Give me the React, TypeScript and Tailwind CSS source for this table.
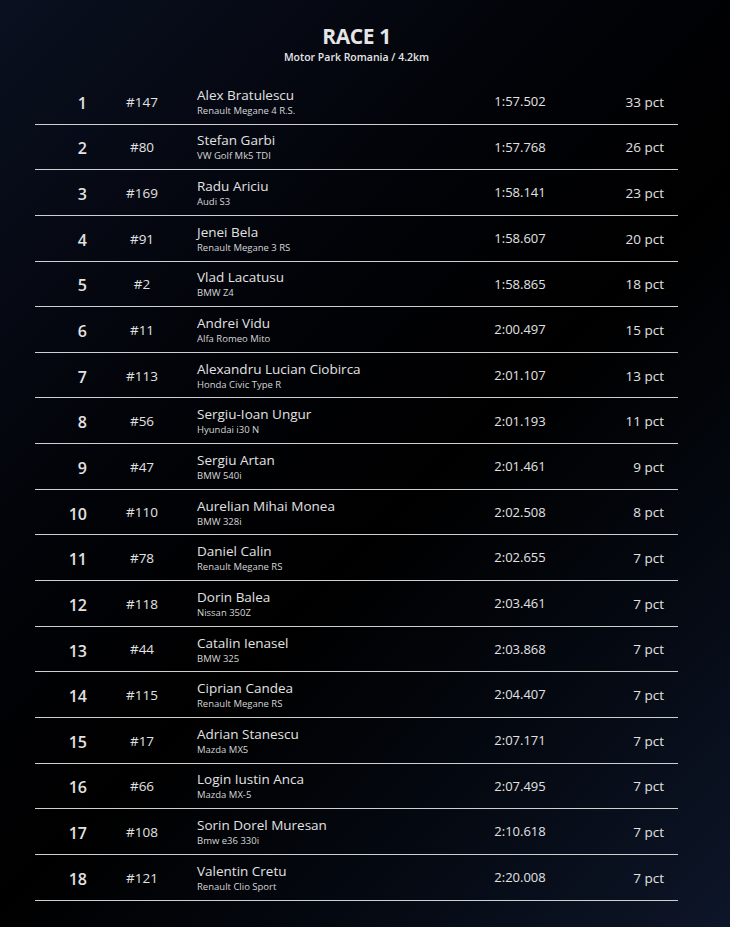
import React from "react"

type Result = {
    pos: number
    num: string
    driver: string
    car: string
    time: string
    points: number
}

const results: Result[] = [
    { pos: 1, num: "#147", driver: "Alex Bratulescu", car: "Renault Megane 4 R.S.", time: "1:57.502", points: 33 },
    { pos: 2, num: "#80", driver: "Stefan Garbi", car: "VW Golf Mk5 TDI", time: "1:57.768", points: 26 },
    { pos: 3, num: "#169", driver: "Radu Ariciu", car: "Audi S3", time: "1:58.141", points: 23 },
    { pos: 4, num: "#91", driver: "Jenei Bela", car: "Renault Megane 3 RS", time: "1:58.607", points: 20 },
    { pos: 5, num: "#2", driver: "Vlad Lacatusu", car: "BMW Z4", time: "1:58.865", points: 18 },
    { pos: 6, num: "#11", driver: "Andrei Vidu", car: "Alfa Romeo Mito", time: "2:00.497", points: 15 },
    { pos: 7, num: "#113", driver: "Alexandru Lucian Ciobirca", car: "Honda Civic Type R", time: "2:01.107", points: 13 },
    { pos: 8, num: "#56", driver: "Sergiu-Ioan Ungur", car: "Hyundai i30 N", time: "2:01.193", points: 11 },
    { pos: 9, num: "#47", driver: "Sergiu Artan", car: "BMW 540i", time: "2:01.461", points: 9 },
    { pos: 10, num: "#110", driver: "Aurelian Mihai Monea", car: "BMW 328i", time: "2:02.508", points: 8 },
    { pos: 11, num: "#78", driver: "Daniel Calin", car: "Renault Megane RS", time: "2:02.655", points: 7 },
    { pos: 12, num: "#118", driver: "Dorin Balea", car: "Nissan 350Z", time: "2:03.461", points: 7 },
    { pos: 13, num: "#44", driver: "Catalin Ienasel", car: "BMW 325", time: "2:03.868", points: 7 },
    { pos: 14, num: "#115", driver: "Ciprian Candea", car: "Renault Megane RS", time: "2:04.407", points: 7 },
    { pos: 15, num: "#17", driver: "Adrian Stanescu", car: "Mazda MX5", time: "2:07.171", points: 7 },
    { pos: 16, num: "#66", driver: "Login Iustin Anca", car: "Mazda MX-5", time: "2:07.495", points: 7 },
    { pos: 17, num: "#108", driver: "Sorin Dorel Muresan", car: "Bmw e36 330i", time: "2:10.618", points: 7 },
    { pos: 18, num: "#121", driver: "Valentin Cretu", car: "Renault Clio Sport", time: "2:20.008", points: 7 },
]

export default function App() {
    return (
        <div className="w-[730px] h-[927px] overflow-hidden bg-[linear-gradient(135deg,#0a1020_0%,#020308_35%,#000000_55%,#040810_75%,#0d1629_100%)] font-['Open_Sans',sans-serif] text-[#e2e2e2]">
            {/* Header */}
            <div className="ml-[35px] w-[643px] pt-[22px] flex flex-col items-center">
                <h1 className="text-[21px] leading-[28px] font-bold text-[#e6e6e6] tracking-[-0.4px]">RACE 1</h1>
                <p className="text-[10.5px] leading-[13px] font-semibold text-[#e6e6e6] mt-[1px]">Motor Park Romania / 4.2km</p>
            </div>

            {/* Results */}
            <div className="ml-[35px] w-[643px] mt-[15px]">
                {results.map((r) => (
                    <div key={r.pos} className="flex items-center h-[45.65px] border-b border-[#cfcfcf]">
                        <div className="w-[52px] text-right text-[16px] font-semibold pt-[3px]">{r.pos}</div>
                        <div className="w-[110px] text-center text-[13.5px] pt-[1px]">{r.num}</div>
                        <div className="w-[253px] flex flex-col">
                            <span className="text-[13.5px] leading-[18px]">{r.driver}</span>
                            <span className="text-[9.5px] leading-[13px] text-[#d6d6d6]">{r.car}</span>
                        </div>
                        <div className="w-[140px] text-center text-[13px] pt-[1px]">{r.time}</div>
                        <div className="w-[74px] text-right text-[13.5px] pt-[1px]">{r.points} pct</div>
                    </div>
                ))}
            </div>
        </div>
    )
}
